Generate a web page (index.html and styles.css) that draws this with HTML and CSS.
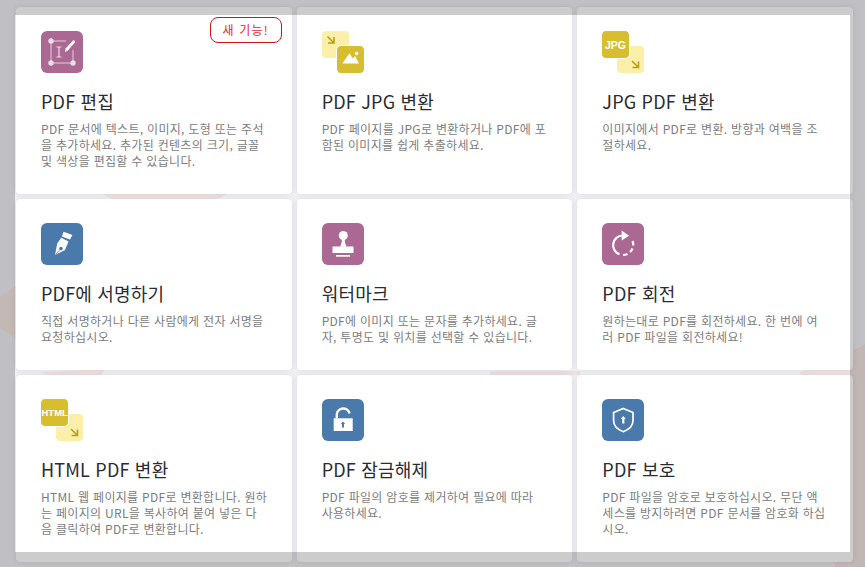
FILE: index.html
```html
<!DOCTYPE html>
<html lang="ko">
<head>
<meta charset="utf-8">
<title>PDF 도구</title>
<link rel="stylesheet" href="styles.css">
</head>
<body>
<svg class="backdrop" viewBox="0 0 865 567" aria-hidden="true">
  <polygon points="-20,312 16,285 16,340" fill="#f5e6e2"/>
  <polygon points="100,193 230,193 215,200 115,200" fill="#f0e2e1"/>
  <polygon points="40,372 105,369 100,376 50,376" fill="#f0e2e1"/>
  <polygon points="490,371 580,371 580,375 490,375" fill="#f0e2e1"/>
  <polygon points="800,372 865,345 865,567 835,567" fill="#f2e4e1"/>
</svg>
<main class="grid">
  <article class="card">
    <svg class="icon" viewBox="0 0 42 42" aria-hidden="true">
      <rect width="42" height="42" rx="6" fill="#ab6893"/>
      <path d="M10 10H25M10 10V32H32V19" fill="none" stroke="#e5cfdc" stroke-width="1"/>
      <circle cx="10" cy="10" r="2.7" fill="#ecdce6"/><circle cx="10" cy="32" r="2.7" fill="#ecdce6"/><circle cx="32" cy="32" r="2.7" fill="#ecdce6"/>
      <path d="M15.5 16H20.5M18 16V26M15.5 26H20.5" fill="none" stroke="#ecdce6" stroke-width="1.2"/>
      <path d="M24 21L24.5 17.5L32 9.5C33 8.5 34.8 10.3 33.8 11.5L26.8 19.5Z" fill="#fff"/>
    </svg>
    <span class="badge">새 기능!</span>
    <h2 class="title">PDF 편집</h2>
    <p class="desc">PDF 문서에 텍스트, 이미지, 도형 또는 주석을 추가하세요. 추가된 컨텐츠의 크기, 글꼴 및 색상을 편집할 수 있습니다.</p>
  </article>
  <article class="card">
    <svg class="icon" viewBox="0 0 42 42" aria-hidden="true">
      <rect width="27" height="27" rx="4" fill="#fbefa9"/>
      <path d="M5.5 5.5L12 12M6 12H12V6" fill="none" stroke="#b9a013" stroke-width="1.6"/>
      <rect x="14.5" y="14.5" width="28" height="28" rx="4.5" fill="#d6be30" stroke="#fff" stroke-width="1"/>
      <path d="M20.3 32.5L27.3 22.5L31 27.5L33 25L37 32.5Z" fill="#fff"/>
      <circle cx="34.7" cy="22.5" r="1.7" fill="#fff"/>
    </svg>
    <h2 class="title">PDF JPG 변환</h2>
    <p class="desc">PDF 페이지를 JPG로 변환하거나 PDF에 포함된 이미지를 쉽게 추출하세요.</p>
  </article>
  <article class="card">
    <svg class="icon" viewBox="0 0 42 42" aria-hidden="true">
      <rect x="15" y="15" width="27" height="27" rx="4" fill="#fbefa9"/>
      <path d="M30 30L36.5 36.5M30.5 36.5H36.5V30.5" fill="none" stroke="#b9a013" stroke-width="1.6"/>
      <rect x="-.5" y="-.5" width="28" height="28" rx="4.5" fill="#d6be30" stroke="#fff" stroke-width="1"/>
      <text class="icon-label" x="13.5" y="17.5">JPG</text>
    </svg>
    <h2 class="title">JPG PDF 변환</h2>
    <p class="desc">이미지에서 PDF로 변환. 방향과 여백을 조절하세요.</p>
  </article>
  <article class="card">
    <svg class="icon" viewBox="0 0 42 42" aria-hidden="true">
      <rect width="42" height="42" rx="6" fill="#4a79ab"/>
      <path d="M22.6 8.7L31.4 12L29 16.6L20.9 13.4Z" fill="#fff"/>
      <path fill-rule="evenodd" d="M20.3 14.8L27.6 18.6L24 27L14 32L16.2 20.6ZM20 23.8A1.8 1.8 0 1 0 20 27.4A1.8 1.8 0 1 0 20 23.8Z" fill="#fff"/>
      <path d="M19.5 26L14.5 31.5" stroke="#4a79ab" stroke-width=".8"/>
    </svg>
    <h2 class="title">PDF에 서명하기</h2>
    <p class="desc">직접 서명하거나 다른 사람에게 전자 서명을 요청하십시오.</p>
  </article>
  <article class="card">
    <svg class="icon" viewBox="0 0 42 42" aria-hidden="true">
      <rect width="42" height="42" rx="6" fill="#ab6893"/>
      <circle cx="21.3" cy="12.5" r="4.5" fill="#fff"/>
      <path d="M19.8 15H22.8L22.8 19L24.5 23.7H18.1L19.8 19Z" fill="#fff"/>
      <rect x="10.5" y="23.5" width="21" height="6.5" fill="#fff"/>
      <rect x="14" y="32" width="14" height="1.7" fill="#fff"/>
    </svg>
    <h2 class="title">워터마크</h2>
    <p class="desc">PDF에 이미지 또는 문자를 추가하세요. 글자, 투명도 및 위치를 선택할 수 있습니다.</p>
  </article>
  <article class="card">
    <svg class="icon" viewBox="0 0 42 42" aria-hidden="true">
      <rect width="42" height="42" rx="6" fill="#ab6893"/>
      <path d="M20.5 12.5A9.7 9.7 0 0 0 17.5 31.3" fill="none" stroke="#fff" stroke-width="2.2"/>
      <path d="M19.7 7.5L27 12.7L19.7 17.5Z" fill="#fff"/>
      <path d="M21 32A10 10 0 0 0 25.5 31M28 29A10 10 0 0 0 30.5 25.5M31.2 22.5A10 10 0 0 0 30.5 18" fill="none" stroke="#fff" stroke-width="2.2"/>
    </svg>
    <h2 class="title">PDF 회전</h2>
    <p class="desc">원하는대로 PDF를 회전하세요. 한 번에 여러 PDF 파일을 회전하세요!</p>
  </article>
  <article class="card">
    <svg class="icon" viewBox="0 0 42 42" aria-hidden="true">
      <rect x="15" y="15" width="27" height="27" rx="4" fill="#fbefa9"/>
      <path d="M30 30L36.5 36.5M30.5 36.5H36.5V30.5" fill="none" stroke="#b9a013" stroke-width="1.6"/>
      <rect x="-.5" y="-.5" width="28" height="28" rx="4.5" fill="#d6be30" stroke="#fff" stroke-width="1"/>
      <text class="icon-label icon-label-small" x="13.7" y="17">HTML</text>
    </svg>
    <h2 class="title">HTML PDF 변환</h2>
    <p class="desc">HTML 웹 페이지를 PDF로 변환합니다. 원하는 페이지의 URL을 복사하여 붙여 넣은 다음 클릭하여 PDF로 변환합니다.</p>
  </article>
  <article class="card">
    <svg class="icon" viewBox="0 0 42 42" aria-hidden="true">
      <rect width="42" height="42" rx="6" fill="#4a79ab"/>
      <path d="M14.8 19.5V15.5A6.5 6.5 0 0 1 27.6 14.5" fill="none" stroke="#fff" stroke-width="2.4"/>
      <rect x="11.7" y="19.3" width="19" height="12.7" fill="#fff"/>
      <path d="M21 22.5L23.2 25H22V28.5H20V25H18.8Z" fill="#4a79ab"/>
    </svg>
    <h2 class="title">PDF 잠금해제</h2>
    <p class="desc">PDF 파일의 암호를 제거하여 필요에 따라 사용하세요.</p>
  </article>
  <article class="card">
    <svg class="icon" viewBox="0 0 42 42" aria-hidden="true">
      <rect width="42" height="42" rx="6" fill="#4a79ab"/>
      <path d="M21.3 9.5L31 13.5V21.5C31 26.5 27 30.5 21.3 32.7C15.6 30.5 11.6 26.5 11.6 21.5V13.5Z" fill="none" stroke="#fff" stroke-width="1.7"/>
      <path d="M21.3 17L23.8 20H22.4V24.5H20.2V20H18.8Z" fill="#fff"/>
    </svg>
    <h2 class="title">PDF 보호</h2>
    <p class="desc">PDF 파일을 암호로 보호하십시오. 무단 액세스를 방지하려면 PDF 문서를 암호화 하십시오.</p>
  </article>
</main>
<div class="scrim"></div>
</body>
</html>
```

FILE: styles.css
```css
* {
  box-sizing: border-box;
}

html,
body {
  margin: 0;
  height: 100%;
  overflow: hidden;
}

body {
  position: relative;
  background: #f1f1f5;
  font-family: "Noto Sans CJK KR", "Noto Sans", sans-serif;
  padding: 6.5px 0 0 16px;
}

.backdrop {
  position: absolute;
  left: 0;
  top: 0;
  width: 865px;
  height: 567px;
}

.grid {
  position: relative;
  display: grid;
  grid-template-columns: repeat(3, 1fr);
  gap: 5px;
  width: 837px;
}

.card {
  position: relative;
  background: #fff;
  border-radius: 4px;
  padding: 24.5px 24.5px 24.5px 25px;
  box-shadow: 0 0 5px rgba(40, 40, 80, 0.12);
}

.icon {
  display: block;
  width: 42px;
  height: 42px;
  overflow: visible;
}

.icon-label {
  font-family: "Liberation Sans", sans-serif;
  font-weight: 700;
  font-size: 10.5px;
  fill: #fff;
  text-anchor: middle;
}

.icon-label-small {
  font-size: 9.5px;
}

.title {
  margin: 16px 0 8px;
  font-size: 18px;
  line-height: 24px;
  font-weight: 400;
  letter-spacing: 0.2px;
  color: #2b2b33;
}

.desc {
  margin: 0;
  font-size: 12px;
  line-height: 16px;
  letter-spacing: 0.3px;
  color: #7c7c82;
}

.badge {
  position: absolute;
  top: 10.5px;
  right: 10px;
  width: 72px;
  height: 26px;
  border: 1px solid #c8141c;
  border-radius: 8px;
  background: #fff;
  color: #e8272d;
  font-size: 12px;
  line-height: 24px;
  letter-spacing: 1.2px;
  text-align: center;
}

.scrim {
  position: absolute;
  left: 15px;
  top: 15px;
  width: 835px;
  height: 537px;
  box-shadow: 0 0 0 1000px rgba(0, 0, 0, 0.2);
  pointer-events: none;
}
```
